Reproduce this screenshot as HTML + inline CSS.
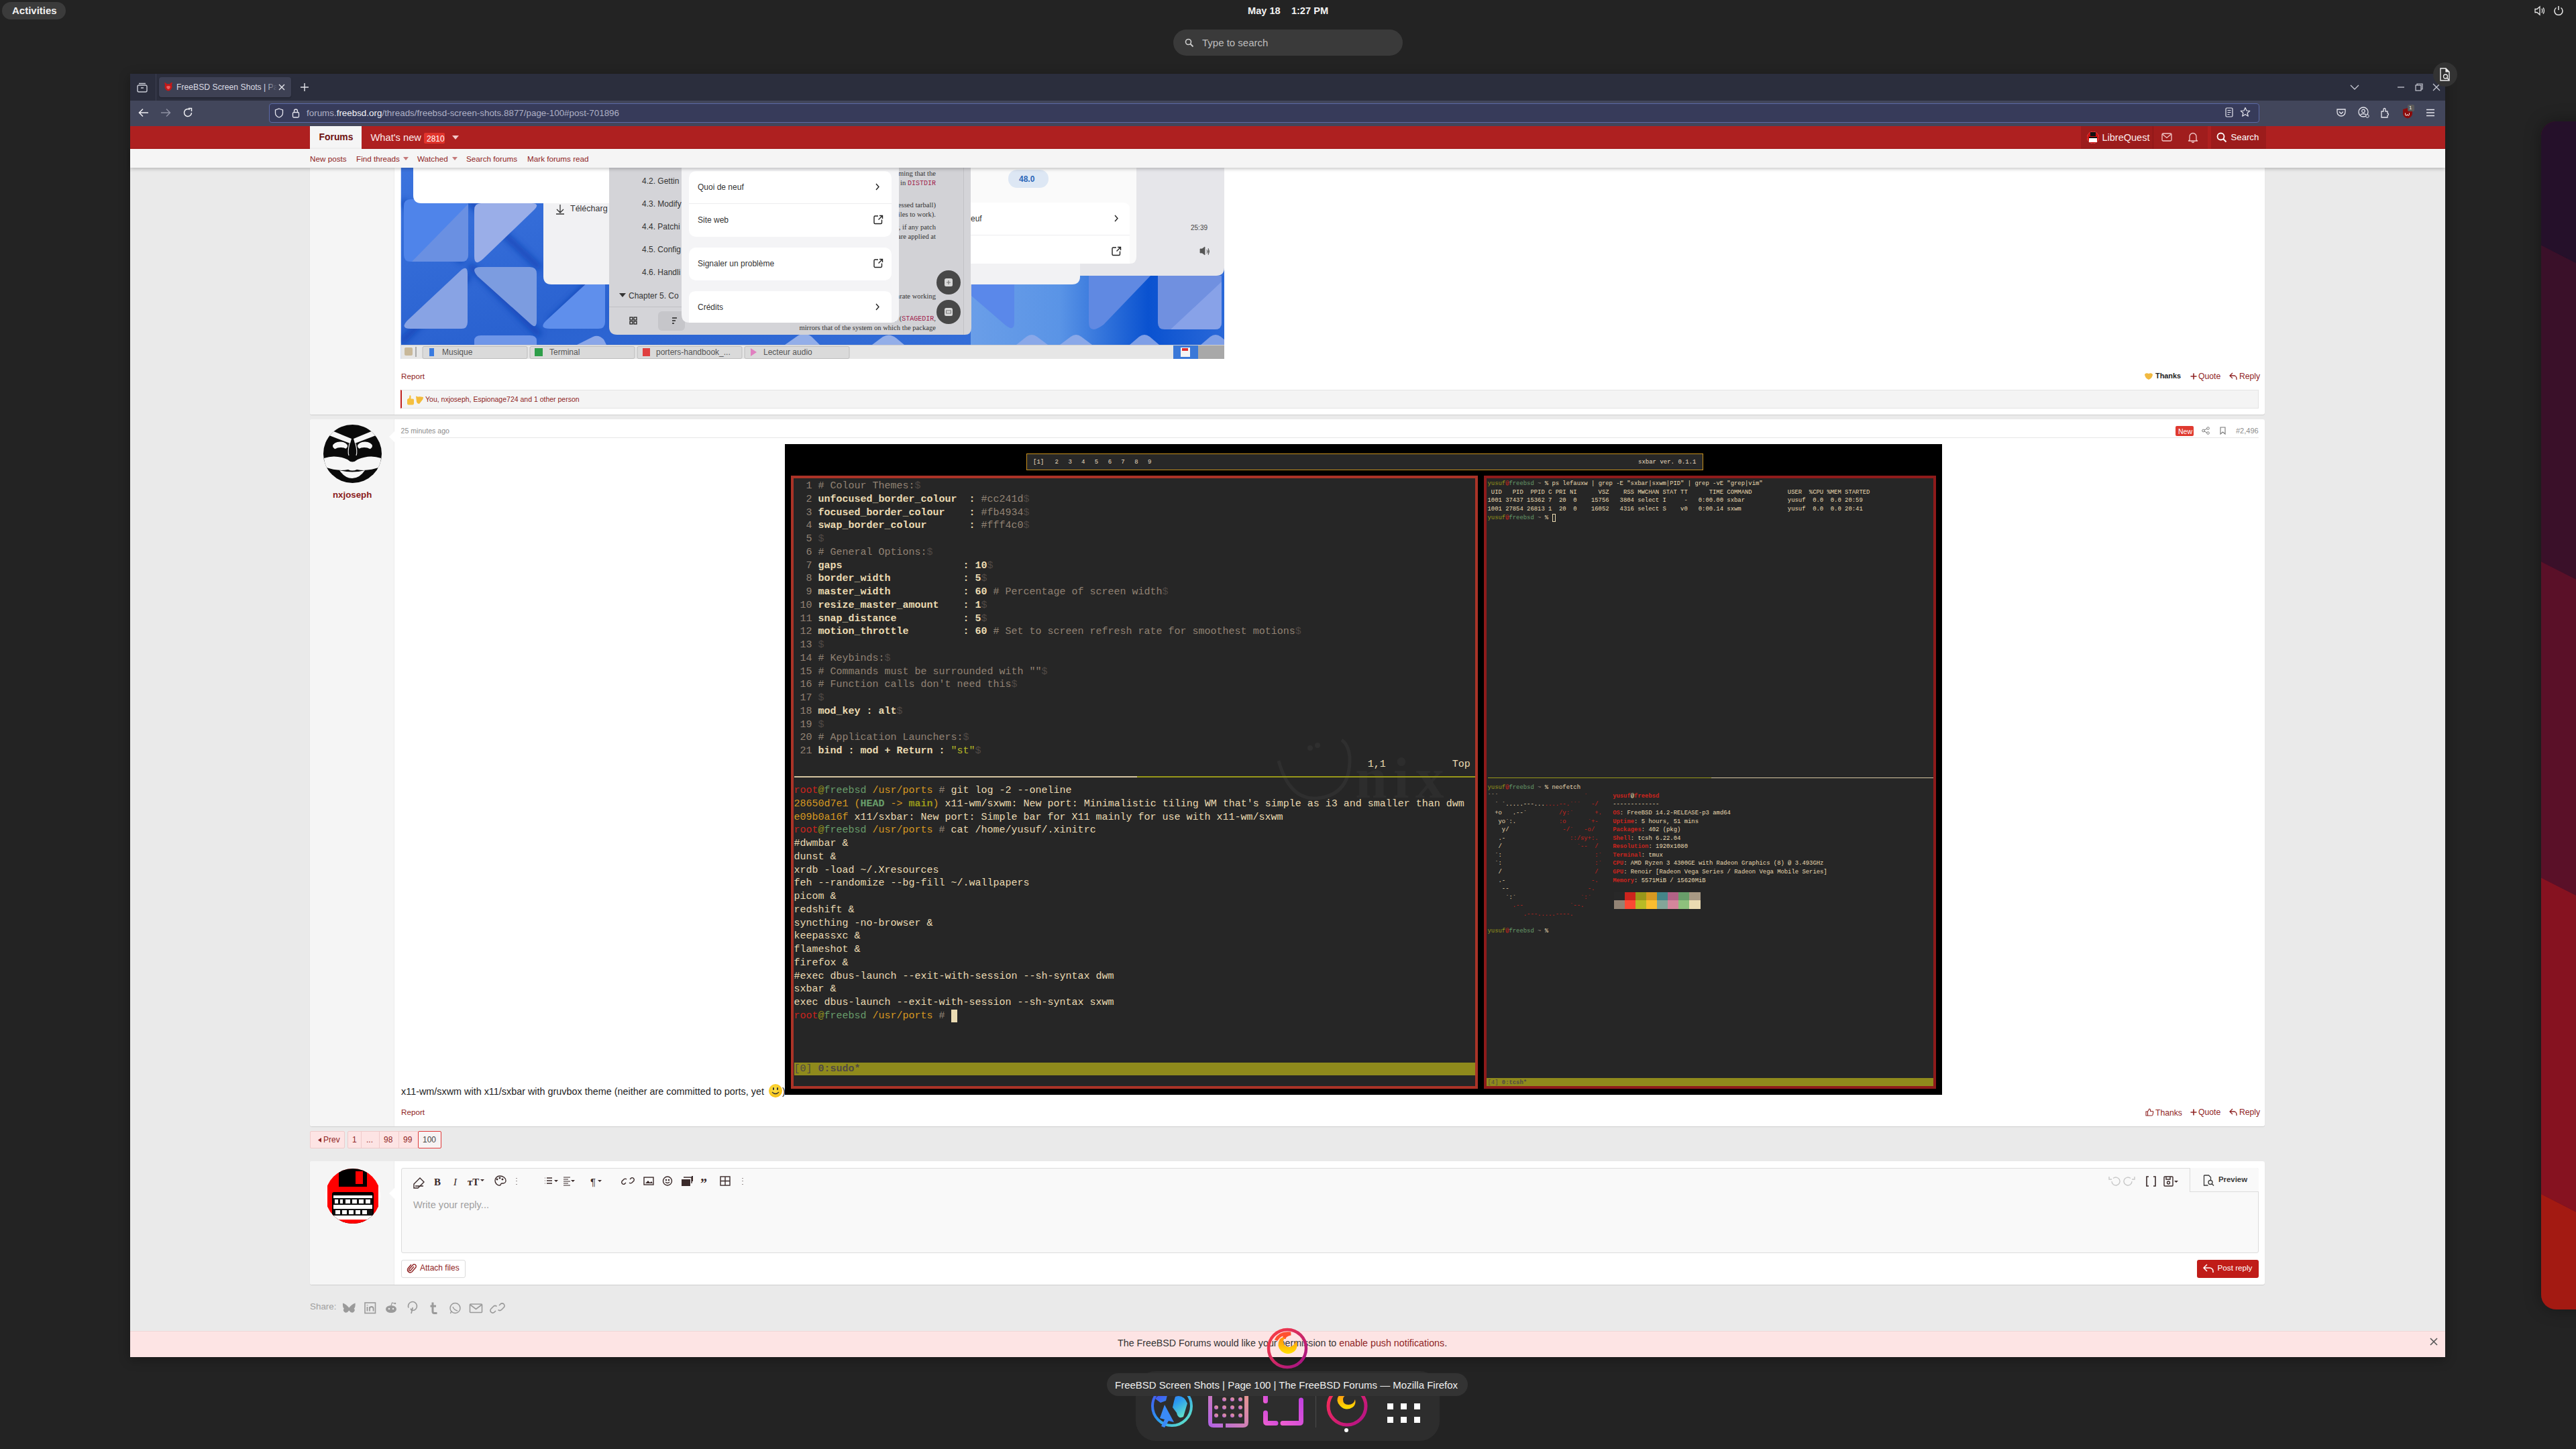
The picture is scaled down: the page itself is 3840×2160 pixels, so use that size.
<!DOCTYPE html>
<html><head><meta charset="utf-8">
<style>
*{margin:0;padding:0;box-sizing:border-box}
html,body{width:3840px;height:2160px;overflow:hidden;background:#232323;font-family:"Liberation Sans",sans-serif}
.a{position:absolute}
.t{position:absolute;white-space:pre;line-height:1}
.mono{font-family:"Liberation Mono",monospace}
svg{position:absolute;overflow:visible}
</style></head><body>

<!-- GNOME top bar -->
<div class="a" style="left:3px;top:3px;width:95px;height:26px;border-radius:13px;background:#3b3b3b"></div>
<div class="t" style="left:18px;top:8px;font-size:15px;font-weight:bold;color:#f0f0f0">Activities</div>
<div class="t" style="left:1860px;top:8.5px;font-size:14.6px;font-weight:bold;color:#f2f2f2">May 18&nbsp;&nbsp;&nbsp;&nbsp;1:27 PM</div>
<div class="a" style="left:1749px;top:44px;width:342px;height:39px;border-radius:20px;background:#3a3a3a"></div>
<svg style="left:1766px;top:57px" width="14" height="14" viewBox="0 0 14 14"><circle cx="5.5" cy="5.5" r="4" fill="none" stroke="#cfcfcf" stroke-width="1.6"/><path d="M8.5 8.5 L12.5 12.5" stroke="#cfcfcf" stroke-width="1.8"/></svg>
<div class="t" style="left:1792px;top:56px;font-size:15px;color:#bdbdbd">Type to search</div>
<!-- volume & power -->
<svg style="left:3778px;top:8px" width="18" height="16" viewBox="0 0 18 16"><path d="M1 5.5h3l4-3.5v12l-4-3.5H1z" fill="none" stroke="#e8e8e8" stroke-width="1.3"/><path d="M11 5c1 1 1 5 0 6M13 3.5c2 2 2 7 0 9" fill="none" stroke="#e8e8e8" stroke-width="1.3"/></svg>
<svg style="left:3806px;top:8px" width="16" height="16" viewBox="0 0 16 16"><path d="M4.5 3.5a6 6 0 1 0 7 0" fill="none" stroke="#e8e8e8" stroke-width="1.5"/><path d="M8 1v6" stroke="#e8e8e8" stroke-width="1.5"/></svg>
<!-- right side wallpaper window -->
<div class="a" style="left:3788px;top:181px;width:80px;height:1771px;border-radius:22px;overflow:hidden;background:#5a1028;box-shadow:0 0 24px rgba(0,0,0,.35)">
<svg style="left:0;top:0" width="80" height="1771" viewBox="0 0 80 1771"><path d="M0 0H80V226L0 185Z" fill="#25102a"/><path d="M0 185L80 226V697L0 656.5Z" fill="#3a1029"/><path d="M0 656.5L80 697V1168L0 1127.5Z" fill="#5a1028"/><path d="M0 1127.5L80 1168V1640L0 1599Z" fill="#861220"/><path d="M0 1599L80 1640V1771H0Z" fill="#a31a12"/></svg>
</div>

<!-- Firefox window -->
<div class="a" style="left:194px;top:110px;width:3451px;height:1913px;background:#eaeaea;box-shadow:0 4px 16px rgba(0,0,0,.3)"></div>
<!-- tab bar -->
<div class="a" style="left:194px;top:110px;width:3451px;height:40px;background:#2b2e3d"></div>
<svg style="left:203px;top:122px" width="18" height="16" viewBox="0 0 18 16"><rect x="2" y="5" width="14" height="10" rx="2" fill="none" stroke="#c8cad4" stroke-width="1.4"/><path d="M4 2.5h10M7 9h4" stroke="#c8cad4" stroke-width="1.4"/></svg>
<div class="a" style="left:232px;top:110px;width:1px;height:40px;background:#3c3f50"></div>
<div class="a" style="left:237px;top:115px;width:197px;height:30px;border-radius:4px;background:#3e4154;box-shadow:0 1px 2px rgba(0,0,0,.3)"></div>
<svg style="left:243px;top:121px" width="16" height="16" viewBox="0 0 16 16"><path d="M2 2q3 0 4 2.5q2-1 4 0q1-2.5 4-2.5q-1 3-1 4q1 2 0 4.5q-2 4-5 4q-3 0-5-4q-1-2.5 0-4.5q0-1-1-4z" fill="#c41818"/><path d="M5 8q3-2 6 0q-1 4-3 4t-3-4z" fill="#e86060"/></svg>
<div class="a" style="left:263px;top:118px;width:150px;height:24px;overflow:hidden"><div class="t" style="left:0;top:6px;font-size:12.2px;color:#dcdce4">FreeBSD Screen Shots | Pa</div></div>
<div class="a" style="left:395px;top:118px;width:18px;height:24px;background:linear-gradient(90deg,rgba(62,65,84,0),#3e4154)"></div>
<svg style="left:415px;top:125px" width="10" height="10" viewBox="0 0 10 10"><path d="M1 1L9 9M9 1L1 9" stroke="#e4e4ea" stroke-width="1.4"/></svg>
<svg style="left:447px;top:123px" width="14" height="14" viewBox="0 0 14 14"><path d="M7 1v12M1 7h12" stroke="#e4e4ea" stroke-width="1.4"/></svg>
<svg style="left:3503px;top:125px" width="14" height="10" viewBox="0 0 14 10"><path d="M1 2L7 8L13 2" fill="none" stroke="#c8cad4" stroke-width="1.3"/></svg>
<svg style="left:3573px;top:125px" width="12" height="10" viewBox="0 0 12 10"><path d="M1 5h10" stroke="#c8cad4" stroke-width="1.3"/></svg>
<svg style="left:3600px;top:124px" width="12" height="12" viewBox="0 0 12 12"><rect x="1" y="3" width="8" height="8" fill="none" stroke="#c8cad4" stroke-width="1.2"/><path d="M3 3V1h8v8H9" fill="none" stroke="#c8cad4" stroke-width="1.2"/></svg>
<svg style="left:3626px;top:124px" width="12" height="12" viewBox="0 0 12 12"><path d="M1 1L11 11M11 1L1 11" stroke="#c8cad4" stroke-width="1.3"/></svg>
<!-- floating circle icon (gnome overview) -->
<div class="a" style="left:3627px;top:93px;width:36px;height:36px;border-radius:50%;background:#333"></div>
<svg style="left:3636px;top:101px" width="18" height="20" viewBox="0 0 18 20"><path d="M2 1h8l5 5v13H2z" fill="none" stroke="#eee" stroke-width="1.4"/><path d="M10 1v5h5" fill="#eee" stroke="#eee" stroke-width="1.2"/><circle cx="9.5" cy="13" r="3" fill="none" stroke="#eee" stroke-width="1.3"/><path d="M11.5 15l3 3" stroke="#eee" stroke-width="1.4"/></svg>
<!-- nav bar -->
<div class="a" style="left:194px;top:150px;width:3451px;height:38px;background:#42465b"></div>
<svg style="left:206px;top:161px" width="16" height="14" viewBox="0 0 16 14"><path d="M15 7H2M7 1.5L1.5 7L7 12.5" fill="none" stroke="#f0f0f4" stroke-width="1.5"/></svg>
<svg style="left:239px;top:161px" width="16" height="14" viewBox="0 0 16 14"><path d="M1 7h13M9 1.5L14.5 7L9 12.5" fill="none" stroke="#8e91a3" stroke-width="1.5"/></svg>
<svg style="left:272px;top:160px" width="16" height="16" viewBox="0 0 16 16"><path d="M13.5 8A5.5 5.5 0 1 1 11 3.4" fill="none" stroke="#f0f0f4" stroke-width="1.5"/><path d="M9 1.5h4.5V6" fill="none" stroke="#f0f0f4" stroke-width="1.5"/></svg>
<div class="a" style="left:401px;top:154px;width:2967px;height:29px;border-radius:4px;background:#373b5a;border:1px solid #5c6aa6"></div>
<svg style="left:409px;top:161px" width="14" height="15" viewBox="0 0 14 15"><path d="M7 1L12.5 3V7.5C12.5 10.5 10 13 7 14C4 13 1.5 10.5 1.5 7.5V3Z" fill="none" stroke="#e6e6ee" stroke-width="1.3"/></svg>
<svg style="left:435px;top:161px" width="12" height="15" viewBox="0 0 12 15"><rect x="1.5" y="6.5" width="9" height="7.5" rx="1.5" fill="none" stroke="#e6e6ee" stroke-width="1.3"/><path d="M3.5 6.5V4.5a2.5 2.5 0 0 1 5 0V6.5" fill="none" stroke="#e6e6ee" stroke-width="1.3"/></svg>
<div class="t" style="left:457px;top:161.5px;font-size:13.4px;color:#aeb1c6">forums.<span style="color:#f4f4f8">freebsd.org</span>/threads/freebsd-screen-shots.8877/page-100#post-701896</div>
<svg style="left:3317px;top:160px" width="12" height="15" viewBox="0 0 12 15"><rect x="1" y="1" width="10" height="13" rx="1.5" fill="none" stroke="#e6e6ee" stroke-width="1.2"/><path d="M3.5 4.5h5M3.5 7.5h5M3.5 10.5h3" stroke="#e6e6ee" stroke-width="1.2"/></svg>
<svg style="left:3339px;top:159px" width="16" height="16" viewBox="0 0 16 16"><path d="M8 1.5L10 6l4.8.4-3.7 3.1 1.2 4.7L8 11.6l-4.3 2.6 1.2-4.7L1.2 6.4 6 6z" fill="none" stroke="#e6e6ee" stroke-width="1.2" stroke-linejoin="round"/></svg>
<svg style="left:3482px;top:160px" width="16" height="16" viewBox="0 0 16 16"><path d="M2 3h12v4a6 6 0 0 1-12 0z" fill="none" stroke="#e6e6ee" stroke-width="1.3"/><path d="M5 6.5l3 3 3-3" fill="none" stroke="#e6e6ee" stroke-width="1.3"/></svg>
<svg style="left:3515px;top:159px" width="18" height="18" viewBox="0 0 18 18"><circle cx="8" cy="8" r="7" fill="none" stroke="#e6e6ee" stroke-width="1.3"/><circle cx="8" cy="6.5" r="2.3" fill="none" stroke="#e6e6ee" stroke-width="1.2"/><path d="M3.5 12.5c1.5-2.5 7.5-2.5 9 0" fill="none" stroke="#e6e6ee" stroke-width="1.2"/><circle cx="14" cy="14" r="2.3" fill="#42465b" stroke="#e6e6ee" stroke-width="1"/></svg>
<svg style="left:3548px;top:160px" width="16" height="16" viewBox="0 0 16 16"><path d="M2 6h3V3a1.5 1.5 0 0 1 3 0v3h3v3a1.5 1.5 0 0 1 0 3v3H2z" fill="none" stroke="#e6e6ee" stroke-width="1.3" stroke-linejoin="round"/></svg>
<svg style="left:3581px;top:160px" width="16" height="17" viewBox="0 0 16 17"><path d="M8 1l7 2v6c0 4-3 6.5-7 7.5C4 15.5 1 13 1 9V3z" fill="#8a0c0c"/><path d="M4.5 8.5v2a1.5 1.5 0 0 0 3 0a1.5 1.5 0 0 0 3 0v-2" fill="none" stroke="#fff" stroke-width="1"/></svg>
<div class="a" style="left:3589px;top:156px;width:10px;height:10px;background:#5a5a5a;border-radius:2px"></div>
<div class="t" style="left:3591px;top:157px;font-size:8px;color:#eee">1</div>
<svg style="left:3616px;top:162px" width="14" height="12" viewBox="0 0 14 12"><path d="M1 1.5h12M1 6h12M1 10.5h12" stroke="#e6e6ee" stroke-width="1.4"/></svg>
<!-- red header -->
<div class="a" style="left:194px;top:188px;width:3451px;height:34px;background:#ae2020"></div>
<div class="a" style="left:462px;top:188px;width:77px;height:34px;background:#f5f5f5"></div>
<div class="t" style="left:475.5px;top:198px;font-size:13.9px;font-weight:bold;color:#6e1010">Forums</div>
<div class="t" style="left:552.5px;top:198px;font-size:14.7px;color:#fbeaea">What's new</div>
<div class="a" style="left:632px;top:198px;width:31px;height:16px;border-radius:2px;background:#e2342c"></div>
<div class="t" style="left:636px;top:201px;font-size:12px;color:#fff">2810</div>
<svg style="left:674px;top:202px" width="10" height="6" viewBox="0 0 10 6"><path d="M0 0h10L5 6z" fill="#f3c8c8"/></svg>
<div class="a" style="left:3102px;top:188px;width:108px;height:34px;background:#9c1c1c"></div>
<div class="a" style="left:3209px;top:188px;width:1px;height:34px;background:#8a1616"></div>
<div class="a" style="left:3250px;top:188px;width:1px;height:34px;background:#8a1616"></div>
<div class="a" style="left:3210px;top:188px;width:81px;height:34px;background:#a01d1d"></div>
<div class="a" style="left:3296px;top:188px;width:82px;height:34px;background:#9c1c1c"></div>
<div class="a" style="left:3111px;top:196px;width:18px;height:18px;border-radius:50%;background:#e8e8e8;overflow:hidden"><div class="a" style="left:0;top:0;width:18px;height:18px;background:#d01010"></div><div class="a" style="left:3px;top:8px;width:12px;height:8px;background:#fff;border-top:2px solid #111"></div><div class="a" style="left:5px;top:1px;width:8px;height:6px;background:#111"></div></div>
<div class="t" style="left:3133.5px;top:198px;font-size:14.5px;color:#fbeaea">LibreQuest</div>
<svg style="left:3222px;top:198px" width="16" height="13" viewBox="0 0 16 13"><rect x="1" y="1" width="14" height="11" rx="1.5" fill="none" stroke="#f1c9c9" stroke-width="1.3"/><path d="M1.5 2L8 7.5L14.5 2" fill="none" stroke="#f1c9c9" stroke-width="1.3"/></svg>
<svg style="left:3262px;top:196px" width="14" height="17" viewBox="0 0 14 17"><path d="M2 12.5V7.5a5 5 0 0 1 10 0v5l1.5 1.5H.5z" fill="none" stroke="#f1c9c9" stroke-width="1.3" stroke-linejoin="round"/><path d="M5.5 15a1.5 1.5 0 0 0 3 0" fill="none" stroke="#f1c9c9" stroke-width="1.3"/></svg>
<svg style="left:3304px;top:197px" width="16" height="16" viewBox="0 0 16 16"><circle cx="6.5" cy="6.5" r="5" fill="none" stroke="#fff" stroke-width="1.8"/><path d="M10 10l4.5 4.5" stroke="#fff" stroke-width="2"/></svg>
<div class="t" style="left:3325.5px;top:198px;font-size:13.2px;color:#fff">Search</div>
<!-- sub nav -->
<div class="a" style="left:194px;top:222px;width:3451px;height:28px;background:#f5f5f5;box-shadow:0 2px 5px rgba(0,0,0,.22);z-index:5"></div>
<div class="t" style="left:462px;top:231px;font-size:11.7px;color:#8f2424;z-index:6">New posts</div>
<div class="t" style="left:531px;top:231px;font-size:11.7px;color:#8f2424;z-index:6">Find threads</div>
<svg style="left:601px;top:234px;z-index:6" width="8" height="5" viewBox="0 0 8 5"><path d="M0 0h8L4 5z" fill="#c47a7a"/></svg>
<div class="t" style="left:622px;top:231px;font-size:11.7px;color:#8f2424;z-index:6">Watched</div>
<svg style="left:674px;top:234px;z-index:6" width="8" height="5" viewBox="0 0 8 5"><path d="M0 0h8L4 5z" fill="#c47a7a"/></svg>
<div class="t" style="left:695px;top:231px;font-size:11.7px;color:#8f2424;z-index:6">Search forums</div>
<div class="t" style="left:786px;top:231px;font-size:11.7px;color:#8f2424;z-index:6">Mark forums read</div>

<!-- post 1 container -->
<div class="a" style="left:462px;top:240px;width:2914px;height:378px;background:#fff;border-radius:0 0 3px 3px;box-shadow:0 1px 1px rgba(0,0,0,.12)"></div>
<div class="a" style="left:462px;top:240px;width:126px;height:378px;background:#f5f5f5;border-right:1px solid #ececec;border-radius:0 0 0 3px"></div>
<!-- post 2 container -->
<div class="a" style="left:462px;top:625px;width:2914px;height:1054px;background:#fff;border-radius:3px;box-shadow:0 1px 1px rgba(0,0,0,.12)"></div>
<div class="a" style="left:462px;top:625px;width:126px;height:1054px;background:#f5f5f5;border-right:1px solid #ececec;border-radius:3px 0 0 3px"></div>
<!-- reply container -->
<div class="a" style="left:462px;top:1731px;width:2914px;height:184px;background:#fff;border-radius:3px;box-shadow:0 1px 1px rgba(0,0,0,.12)"></div>
<div class="a" style="left:462px;top:1731px;width:126px;height:184px;background:#f5f5f5;border-right:1px solid #ececec;border-radius:3px 0 0 3px"></div>

<!-- post1 embedded screenshot -->
<svg style="left:0;top:0" width="3840" height="2160" viewBox="0 0 3840 2160">
<defs>
<clipPath id="c1"><rect x="597.5" y="240" width="1227.5" height="295"/></clipPath>
<linearGradient id="bl" x1="0" y1="0" x2="1" y2="1"><stop offset="0" stop-color="#3c74de"/><stop offset=".5" stop-color="#2a62d0"/><stop offset="1" stop-color="#3a74dc"/></linearGradient><filter id="blur4" x="-20%" y="-20%" width="140%" height="140%"><feGaussianBlur stdDeviation="5"/></filter><linearGradient id="bl2" x1="0" y1="0" x2="1" y2="0"><stop offset="0" stop-color="#6a9ee8"/><stop offset=".35" stop-color="#5a94e6"/><stop offset=".7" stop-color="#0a52d0"/><stop offset="1" stop-color="#2a68d8"/></linearGradient>
</defs>
<g clip-path="url(#c1)" font-family="Liberation Sans, sans-serif">
<rect x="597.5" y="240" width="1227.5" height="295" fill="url(#bl)"/>
<g filter="url(#blur4)" stroke="#0a3cb0" stroke-width="9" opacity=".75" fill="none"><path d="M700 395L805 500"/><path d="M598 510L700 410"/><path d="M805 400L700 300"/><path d="M900 400L820 480"/><path d="M600 300L690 390"/></g>
<!-- triangles -->
<path d="M612 297H688Q698 297 698 307V380Q698 390 688 390H612Q602 390 602 380V307Q602 297 612 297Z" fill="#4f84ea"/>
<path d="M698 304V380Q698 390 688 390H614Z" fill="#6a90e2"/>
<path d="M717 303H792Q806 303 796 313L720 386Q707 398 707 382V313Q707 303 717 303Z" fill="#9aaee8"/>
<path d="M612 490H688Q697 490 697 480V408Q697 394 686 404L607 478Q596 490 612 490Z" fill="#88a3e4"/>
<path d="M717 398H790Q800 398 800 408V478Q800 492 790 482L712 412Q700 398 717 398Z" fill="#7c9ce0"/>
<path d="M820 490H892Q902 490 902 480V410Q902 396 892 406L814 478Q802 490 820 490Z" fill="#5f8fec"/>
<rect x="1447" y="411" width="378" height="103" fill="url(#bl2)"/>
<path d="M1447 424H1512V480Q1512 496 1498 484L1447 440Z" fill="#5a88ea"/>
<path d="M1623 411H1715L1645 484Q1623 500 1623 480Z" fill="#6089e2"/>
<path d="M1726 411H1821V481Q1821 491 1811 491H1736Q1726 491 1726 481Z" fill="#7090e0"/>
<path d="M1821 420V481Q1821 491 1811 491H1745Z" fill="#88a2e8"/>
<path d="M1515 514L1530 502Q1538 496 1546 502L1562 514Z" fill="#8aa8e8"/>
<path d="M1580 514L1596 502Q1604 496 1612 502L1628 514Z" fill="#8aa8e8"/>
<path d="M1684 514L1698 502Q1706 496 1714 502L1728 514Z" fill="#7f9fe6"/>
<path d="M1790 514L1804 502Q1812 496 1820 502L1834 514Z" fill="#7f9fe6"/>
<path d="M707 514V508Q707 500 717 500H790Q800 500 800 508V514Z" fill="#6f96e8"/>
<path d="M860 514L884 502Q892 498 900 506L904 514Z" fill="#8aa6e8"/>
<path d="M1170 514L1190 500Q1200 494 1210 502L1222 514Z" fill="#93aee8"/>
<path d="M1300 514L1316 502Q1326 496 1336 504L1348 514Z" fill="#93aee8"/>
<!-- white panel top-left -->
<path d="M616 240H910V303H628Q616 303 616 291Z" fill="#ffffff"/>
<path d="M810 303H910V424H822Q810 424 810 412Z" fill="#f1f1f3"/>
<path d="M835 305v11M830 312l5 5 5-5M829 319h12" fill="none" stroke="#333" stroke-width="1.3"/>
<text x="850" y="315" font-size="12.5" fill="#333">Télécharg</text>
<!-- gray main panel -->
<path d="M908 240H1448V489Q1448 499 1438 499H920Q908 499 908 487Z" fill="#d4d4d8"/>
<rect x="908" y="457" width="270" height="1" fill="#c0c0c4"/>
<rect x="981" y="464" width="40" height="29" rx="6" fill="#c6c6ca"/>
<g fill="none" stroke="#222" stroke-width="1.3"><rect x="939" y="473" width="4" height="4"/><rect x="945" y="473" width="4" height="4"/><rect x="939" y="479" width="4" height="4"/><rect x="945" y="479" width="4" height="4"/></g>
<path d="M1002 474h7M1002 478h5M1002 482h3" stroke="#222" stroke-width="1.3"/>
<g font-size="12" fill="#333"><text x="957" y="274">4.2. Gettin</text><text x="957" y="308">4.3. Modify</text><text x="957" y="342">4.4. Patchi</text><text x="957" y="376">4.5. Config</text><text x="957" y="410">4.6. Handli</text><text x="937" y="445">Chapter 5. Co</text></g>
<path d="M923 437h10l-5 6z" fill="#333"/>
<!-- pdf page text -->
<rect x="1178" y="240" width="258" height="259" fill="#d2d2d6"/>
<rect x="1436" y="240" width="1" height="259" fill="#c2c2c6"/>
<g font-family="Liberation Serif, serif" font-size="10.6" fill="#333" text-anchor="end">
<text x="1395" y="262">assuming that the</text><text x="1395" y="276">the file in <tspan fill="#a0204a" font-family="Liberation Mono, monospace" font-size="10">DISTDIR</tspan></text>
<text x="1395" y="309">(compressed tarball)</text><text x="1395" y="323">files to work).</text>
<text x="1395" y="342">directory, if any patch</text><text x="1395" y="356">files are applied at</text>
<text x="1395" y="445">a  separate  working</text><text x="1395" y="478">staging directory (<tspan fill="#a0204a" font-family="Liberation Mono, monospace" font-size="10">STAGEDIR</tspan>,</text>
<text x="1395" y="492">mirrors that of the system on which the package</text>
</g>
<circle cx="1414" cy="421" r="18" fill="#484848"/><rect x="1408" y="415" width="12" height="12" rx="2.5" fill="#d8d8d8"/><path d="M1414 418v6M1411 421h6" stroke="#777" stroke-width="1.2"/>
<circle cx="1414" cy="465" r="18" fill="#484848"/><rect x="1408" y="459" width="12" height="12" rx="2.5" fill="#d8d8d8"/><rect x="1410.5" y="463" width="7" height="4" fill="none" stroke="#777" stroke-width="1"/>
<!-- dialog -->
<path d="M1016 240H1340V469Q1340 481 1328 481H1028Q1016 481 1016 469Z" fill="#f4f4f6"/>
<rect x="1027" y="255" width="302" height="98" rx="10" fill="#fff"/>
<rect x="1027" y="303" width="302" height="1" fill="#ececee"/>
<rect x="1027" y="369" width="302" height="49" rx="10" fill="#fff"/>
<path d="M1037 434H1319Q1329 434 1329 444V481H1027V444Q1027 434 1037 434Z" fill="#fff"/>
<g font-size="12" fill="#333"><text x="1040" y="283">Quoi de neuf</text><text x="1040" y="332">Site web</text><text x="1040" y="397">Signaler un problème</text><text x="1040" y="462">Crédits</text></g>
<g fill="none" stroke="#222" stroke-width="1.4"><path d="M1306 274l4 4.5-4 4.5M1306 453l4 4.5-4 4.5"/><path d="M1309 322h-4.5a1.5 1.5 0 0 0-1.5 1.5v8.5a1.5 1.5 0 0 0 1.5 1.5h8.5a1.5 1.5 0 0 0 1.5-1.5v-4.5M1309.5 327.5l6-6M1311 321.5h4.5v4.5M1309 387h-4.5a1.5 1.5 0 0 0-1.5 1.5v8.5a1.5 1.5 0 0 0 1.5 1.5h8.5a1.5 1.5 0 0 0 1.5-1.5v-4.5M1309.5 392.5l6-6M1311 386.5h4.5v4.5"/></g>
<!-- right dialog -->
<path d="M1447 240H1825V399Q1825 411 1813 411H1447Z" fill="#e6e6ea"/>
<path d="M1447 392H1610V412Q1610 424 1598 424H1447Z" fill="#f2f2f4"/>
<path d="M1447 240H1694V383Q1694 393 1684 393H1447Z" fill="#fafafa"/>
<path d="M1447 302H1674Q1684 302 1684 312V393H1447Z" fill="#ffffff"/>
<rect x="1447" y="350" width="237" height="1" fill="#ececee"/>
<rect x="1503" y="253" width="60" height="27" rx="13" fill="#dde7f4"/>
<text x="1519" y="271" font-size="12" font-weight="bold" fill="#2a66b8">48.0</text>
<text x="1447" y="330" font-size="12" fill="#333">euf</text>
<path d="M1662 321l4 4.5-4 4.5" fill="none" stroke="#222" stroke-width="1.4"/>
<path d="M1664 369h-4.5a1.5 1.5 0 0 0-1.5 1.5v8.5a1.5 1.5 0 0 0 1.5 1.5h8.5a1.5 1.5 0 0 0 1.5-1.5v-4.5M1664.5 374.5l6-6M1666 368.5h4.5v4.5" fill="none" stroke="#222" stroke-width="1.4"/>
<text x="1775" y="343" font-size="10" fill="#444">25:39</text>
<path d="M1789 371h3l4-3v12l-4-3h-3zM1799 372q2 3 0 6M1801 370q3 5 0 10" fill="#555" stroke="#555" stroke-width=".8"/>
<!-- taskbar -->
<rect x="597.5" y="514" width="1227.5" height="21" fill="#e6e6e6"/>
<rect x="597.5" y="514" width="1227.5" height="1" fill="#d0d0d0"/>
<rect x="603" y="518" width="12" height="12" rx="2" fill="#c8b89a"/>
<rect x="619" y="517" width="2" height="15" fill="#aaa"/>
<g fill="#dadada" stroke="#bcbcbc" stroke-width="1"><rect x="630" y="516.5" width="156" height="18" rx="2"/><rect x="790" y="516.5" width="156" height="18" rx="2"/><rect x="950" y="516.5" width="156" height="18" rx="2"/><rect x="1110" y="516.5" width="156" height="18" rx="2"/></g>
<rect x="640" y="519" width="7" height="12" fill="#3a7be0"/>
<rect x="797" y="519" width="12" height="12" fill="#2e9e4a"/>
<rect x="958" y="519" width="11" height="12" fill="#e04040"/>
<path d="M1119 519l9 6-9 6z" fill="#e080c0"/>
<g font-size="12" fill="#555"><text x="659" y="529">Musique</text><text x="819" y="529">Terminal</text><text x="978" y="529">porters-handbook_...</text><text x="1138" y="529">Lecteur audio</text></g>
<rect x="1749" y="515" width="37" height="20" fill="#3a78d8"/>
<rect x="1760" y="518" width="14" height="14" fill="#f4f4f4"/><rect x="1762" y="519" width="9" height="4" fill="#e03030"/>
<rect x="1786" y="515" width="39" height="20" fill="#a8a8a8"/>
</g>
</svg>
<!-- post1 footer -->
<div class="t" style="left:598px;top:555px;font-size:11.7px;color:#8f2424">Report</div>
<svg style="left:3196px;top:555px" width="14" height="12" viewBox="0 0 14 12"><path d="M1 3Q3 0 7 2Q11 0 13 3Q13 8 7 11Q1 8 1 3Z" fill="#f1b940"/></svg>
<div class="t" style="left:3213px;top:555px;font-size:10.9px;font-weight:bold;color:#222">Thanks</div>
<svg style="left:3265px;top:556px" width="10" height="10" viewBox="0 0 10 10"><path d="M5 0.5v9M0.5 5h9" stroke="#8f2424" stroke-width="1.6"/></svg><div class="t" style="left:3277px;top:555px;font-size:12.2px;color:#8f2424">Quote</div>
<svg style="left:3323px;top:555px" width="12" height="12" viewBox="0 0 12 12"><path d="M5 1L1 5l4 4M1 5h6a4 4 0 0 1 4 4v2" fill="none" stroke="#8f2424" stroke-width="1.3"/></svg>
<div class="t" style="left:3338px;top:555px;font-size:12.2px;color:#8f2424">Reply</div>
<div class="a" style="left:597px;top:581px;width:2770px;height:28px;background:#f4f4f4;border:1px solid #e4e4e4;border-left:2px solid #c02020"></div>
<svg style="left:605px;top:588px" width="28" height="16" viewBox="0 0 28 16"><path d="M5.5 1.5q1.5-1 2 1v4h3q1.5 0 1.5 1.5v5.5q0 2-2 2H4q-2 0-2-2V8q0-1 1-1.5l2-1z" fill="#f5c040"/><path d="M15 2.5l3 1q3-.5 5 0l3 .5q0 3-2 5l-4 5q-3 0-4-3z" fill="#f3bb3a"/></svg>
<div class="t" style="left:634px;top:590px;font-size:10.5px;color:#8f2424">You, nxjoseph, Espionage724 and 1 other person</div>

<!-- post2 user -->
<div class="a" style="left:482px;top:633px;width:87px;height:87px;border-radius:50%;background:#0a0a0a;overflow:hidden">
<svg style="left:0;top:0" width="87" height="87" viewBox="0 0 87 87"><g fill="#f6f6f6"><path d="M6 15L13 9L42 21L40 28Z"/><path d="M47 28L45 21L74 9L81 15Z"/><ellipse cx="25" cy="32" rx="11" ry="6.5"/><ellipse cx="62" cy="32" rx="11" ry="6.5"/></g><g fill="#0a0a0a"><ellipse cx="26" cy="42" rx="12" ry="8"/><ellipse cx="61" cy="42" rx="12" ry="8"/></g><path d="M39 28Q36 40 38 46M48 28Q51 40 49 46" fill="none" stroke="#f0f0f0" stroke-width="1.2"/><path d="M1 50Q18 44 36 52Q43 59 51 52Q69 44 86 50L85 63Q66 70 50 67Q43 70 37 67Q21 70 2 63Z" fill="#f6f6f6"/><path d="M24 68Q43 73 62 68Q54 80 43 80Q32 80 24 68Z" fill="#f6f6f6"/></svg>
</div>
<div class="t" style="left:496px;top:731px;font-size:13.3px;font-weight:bold;color:#8a1c1c">nxjoseph</div>
<svg style="left:580px;top:642px" width="9" height="18" viewBox="0 0 9 18"><path d="M9 0L0 9L9 18Z" fill="#fff"/></svg>
<div class="t" style="left:597.5px;top:637px;font-size:10.6px;color:#8c8c8c">25 minutes ago</div>
<div class="a" style="left:597px;top:652px;width:2770px;height:1px;background:#e6e6e6"></div>
<div class="a" style="left:3243px;top:635px;width:27px;height:14.5px;border-radius:2px;background:#df3a30"></div>
<div class="t" style="left:3247px;top:637.5px;font-size:10.5px;color:#fff">New</div>
<svg style="left:3282px;top:636px" width="12" height="12" viewBox="0 0 12 12"><circle cx="9.5" cy="2.5" r="1.8" fill="none" stroke="#777" stroke-width="1"/><circle cx="2.5" cy="6" r="1.8" fill="none" stroke="#777" stroke-width="1"/><circle cx="9.5" cy="9.5" r="1.8" fill="none" stroke="#777" stroke-width="1"/><path d="M4 5L8 3M4 7L8 9" stroke="#777" stroke-width="1"/></svg>
<svg style="left:3309px;top:636px" width="9" height="12" viewBox="0 0 9 12"><path d="M1 1h7v10L4.5 8 1 11z" fill="none" stroke="#777" stroke-width="1.1"/></svg>
<div class="t" style="left:3333px;top:637px;font-size:11px;color:#8c8c8c">#2,496</div>

<div class="a" style="left:1170px;top:662px;width:1725px;height:970px;background:#000"></div>
<div class="a" style="left:1529.5px;top:676px;width:1009.5px;height:25px;background:#282828;border:1.5px solid #c8901c"></div>
<div class="t mono" style="left:1540px;top:685px;font-size:9px;color:#e8dcc0">[1]</div>
<div class="t mono" style="left:1572.5px;top:685px;font-size:9px;color:#e8dcc0">2</div>
<div class="t mono" style="left:1592.4px;top:685px;font-size:9px;color:#e8dcc0">3</div>
<div class="t mono" style="left:1612px;top:685px;font-size:9px;color:#e8dcc0">4</div>
<div class="t mono" style="left:1631.8px;top:685px;font-size:9px;color:#e8dcc0">5</div>
<div class="t mono" style="left:1651.7px;top:685px;font-size:9px;color:#e8dcc0">6</div>
<div class="t mono" style="left:1671.3px;top:685px;font-size:9px;color:#e8dcc0">7</div>
<div class="t mono" style="left:1691.2px;top:685px;font-size:9px;color:#e8dcc0">8</div>
<div class="t mono" style="left:1711px;top:685px;font-size:9px;color:#e8dcc0">9</div>
<div class="t mono" style="left:2442px;top:685px;font-size:9px;color:#e8dcc0">sxbar ver. 0.1.1</div>
<div class="a" style="left:1179px;top:709px;width:1024px;height:914px;background:#262626;border:4.5px solid #ab3327"></div>
<div class="a" style="left:2212px;top:709px;width:674px;height:914px;background:#262626;border:4px solid #8e1b1b"></div>
<svg style="left:0;top:0" width="3840" height="2160" viewBox="0 0 3840 2160"><path d="M1906 1134Q1922 1192 1962 1190Q2014 1186 2012 1128Q2010 1110 2000 1103" fill="none" stroke="#2f2f2f" stroke-width="5"/><circle cx="1953" cy="1115" r="4" fill="#2f2f2f"/><circle cx="1964" cy="1111" r="4" fill="#2f2f2f"/><text x="2020" y="1189" font-family="Liberation Serif" font-size="86" font-weight="bold" letter-spacing="9" fill="#2d2d2d">nix</text></svg>
<div class="t mono" style="left:1183.5px;top:717.2px;font-size:15px"><span style="color:#928374">  1 </span><span style="color:#928374"># Colour Themes:</span><span style="color:#504945">$</span></div>
<div class="t mono" style="left:1183.5px;top:736.9px;font-size:15px"><span style="color:#928374">  2 </span><span style="color:#ebdbb2;font-weight:bold">unfocused_border_colour  </span><span style="color:#ebdbb2;font-weight:bold">: </span><span style="color:#928374">#cc241d</span><span style="color:#504945">$</span></div>
<div class="t mono" style="left:1183.5px;top:756.7px;font-size:15px"><span style="color:#928374">  3 </span><span style="color:#ebdbb2;font-weight:bold">focused_border_colour    </span><span style="color:#ebdbb2;font-weight:bold">: </span><span style="color:#928374">#fb4934</span><span style="color:#504945">$</span></div>
<div class="t mono" style="left:1183.5px;top:776.4px;font-size:15px"><span style="color:#928374">  4 </span><span style="color:#ebdbb2;font-weight:bold">swap_border_colour       </span><span style="color:#ebdbb2;font-weight:bold">: </span><span style="color:#928374">#fff4c0</span><span style="color:#504945">$</span></div>
<div class="t mono" style="left:1183.5px;top:796.2px;font-size:15px"><span style="color:#928374">  5 </span><span style="color:#504945">$</span></div>
<div class="t mono" style="left:1183.5px;top:815.9px;font-size:15px"><span style="color:#928374">  6 </span><span style="color:#928374"># General Options:</span><span style="color:#504945">$</span></div>
<div class="t mono" style="left:1183.5px;top:835.6px;font-size:15px"><span style="color:#928374">  7 </span><span style="color:#ebdbb2;font-weight:bold">gaps                    : 10</span><span style="color:#504945">$</span></div>
<div class="t mono" style="left:1183.5px;top:855.4px;font-size:15px"><span style="color:#928374">  8 </span><span style="color:#ebdbb2;font-weight:bold">border_width            : 5</span><span style="color:#504945">$</span></div>
<div class="t mono" style="left:1183.5px;top:875.1px;font-size:15px"><span style="color:#928374">  9 </span><span style="color:#ebdbb2;font-weight:bold">master_width            : 60</span><span style="color:#928374"> # Percentage of screen width</span><span style="color:#504945">$</span></div>
<div class="t mono" style="left:1183.5px;top:894.9px;font-size:15px"><span style="color:#928374"> 10 </span><span style="color:#ebdbb2;font-weight:bold">resize_master_amount    : 1</span><span style="color:#504945">$</span></div>
<div class="t mono" style="left:1183.5px;top:914.6px;font-size:15px"><span style="color:#928374"> 11 </span><span style="color:#ebdbb2;font-weight:bold">snap_distance           : 5</span><span style="color:#504945">$</span></div>
<div class="t mono" style="left:1183.5px;top:934.3px;font-size:15px"><span style="color:#928374"> 12 </span><span style="color:#ebdbb2;font-weight:bold">motion_throttle         : 60</span><span style="color:#928374"> # Set to screen refresh rate for smoothest motions</span><span style="color:#504945">$</span></div>
<div class="t mono" style="left:1183.5px;top:954.1px;font-size:15px"><span style="color:#928374"> 13 </span><span style="color:#504945">$</span></div>
<div class="t mono" style="left:1183.5px;top:973.8px;font-size:15px"><span style="color:#928374"> 14 </span><span style="color:#928374"># Keybinds:</span><span style="color:#504945">$</span></div>
<div class="t mono" style="left:1183.5px;top:993.6px;font-size:15px"><span style="color:#928374"> 15 </span><span style="color:#928374"># Commands must be surrounded with ""</span><span style="color:#504945">$</span></div>
<div class="t mono" style="left:1183.5px;top:1013.3px;font-size:15px"><span style="color:#928374"> 16 </span><span style="color:#928374"># Function calls don't need this</span><span style="color:#504945">$</span></div>
<div class="t mono" style="left:1183.5px;top:1033.0px;font-size:15px"><span style="color:#928374"> 17 </span><span style="color:#504945">$</span></div>
<div class="t mono" style="left:1183.5px;top:1052.8px;font-size:15px"><span style="color:#928374"> 18 </span><span style="color:#ebdbb2;font-weight:bold">mod_key : alt</span><span style="color:#504945">$</span></div>
<div class="t mono" style="left:1183.5px;top:1072.5px;font-size:15px"><span style="color:#928374"> 19 </span><span style="color:#504945">$</span></div>
<div class="t mono" style="left:1183.5px;top:1092.3px;font-size:15px"><span style="color:#928374"> 20 </span><span style="color:#928374"># Application Launchers:</span><span style="color:#504945">$</span></div>
<div class="t mono" style="left:1183.5px;top:1112.0px;font-size:15px"><span style="color:#928374"> 21 </span><span style="color:#ebdbb2;font-weight:bold">bind : mod + Return : </span><span style="color:#b8bb26">"st"</span><span style="color:#504945">$</span></div>
<div class="t mono" style="left:1183.5px;top:1131.7px;font-size:15px"><span style="color:#ebdbb2">                                                                                               1,1           Top</span></div>
<div class="a" style="left:1183.5px;top:1157px;width:511px;height:1.5px;background:#d5c4a1"></div>
<div class="a" style="left:1694.5px;top:1157px;width:504px;height:1.5px;background:#98971a"></div>
<div class="t mono" style="left:1183.5px;top:1171.2px;font-size:15px"><span style="color:#cc241d">root</span><span style="color:#98971a">@</span><span style="color:#689d6a">freebsd</span><span style="color:#d79921"> /usr/ports</span><span style="color:#928374"> # </span><span style="color:#ebdbb2">git log -2 --oneline</span></div>
<div class="t mono" style="left:1183.5px;top:1191.0px;font-size:15px"><span style="color:#d79921">28650d7e1 </span><span style="color:#d79921">(</span><span style="color:#689d6a;font-weight:bold">HEAD</span><span style="color:#d79921"> -&gt; </span><span style="color:#98971a;font-weight:bold">main</span><span style="color:#d79921">)</span><span style="color:#ebdbb2"> x11-wm/sxwm: New port: Minimalistic tiling WM that's simple as i3 and smaller than dwm</span></div>
<div class="t mono" style="left:1183.5px;top:1210.7px;font-size:15px"><span style="color:#d79921">e09b0a16f</span><span style="color:#ebdbb2"> x11/sxbar: New port: Simple bar for X11 mainly for use with x11-wm/sxwm</span></div>
<div class="t mono" style="left:1183.5px;top:1230.4px;font-size:15px"><span style="color:#cc241d">root</span><span style="color:#98971a">@</span><span style="color:#689d6a">freebsd</span><span style="color:#d79921"> /usr/ports</span><span style="color:#928374"> # </span><span style="color:#ebdbb2">cat /home/yusuf/.xinitrc</span></div>
<div class="t mono" style="left:1183.5px;top:1250.2px;font-size:15px"><span style="color:#ebdbb2">#dwmbar &amp;</span></div>
<div class="t mono" style="left:1183.5px;top:1269.9px;font-size:15px"><span style="color:#ebdbb2">dunst &amp;</span></div>
<div class="t mono" style="left:1183.5px;top:1289.7px;font-size:15px"><span style="color:#ebdbb2">xrdb -load ~/.Xresources</span></div>
<div class="t mono" style="left:1183.5px;top:1309.4px;font-size:15px"><span style="color:#ebdbb2">feh --randomize --bg-fill ~/.wallpapers</span></div>
<div class="t mono" style="left:1183.5px;top:1329.1px;font-size:15px"><span style="color:#ebdbb2">picom &amp;</span></div>
<div class="t mono" style="left:1183.5px;top:1348.9px;font-size:15px"><span style="color:#ebdbb2">redshift &amp;</span></div>
<div class="t mono" style="left:1183.5px;top:1368.6px;font-size:15px"><span style="color:#ebdbb2">syncthing -no-browser &amp;</span></div>
<div class="t mono" style="left:1183.5px;top:1388.4px;font-size:15px"><span style="color:#ebdbb2">keepassxc &amp;</span></div>
<div class="t mono" style="left:1183.5px;top:1408.1px;font-size:15px"><span style="color:#ebdbb2">flameshot &amp;</span></div>
<div class="t mono" style="left:1183.5px;top:1427.8px;font-size:15px"><span style="color:#ebdbb2">firefox &amp;</span></div>
<div class="t mono" style="left:1183.5px;top:1447.6px;font-size:15px"><span style="color:#ebdbb2">#exec dbus-launch --exit-with-session --sh-syntax dwm</span></div>
<div class="t mono" style="left:1183.5px;top:1467.3px;font-size:15px"><span style="color:#ebdbb2">sxbar &amp;</span></div>
<div class="t mono" style="left:1183.5px;top:1487.1px;font-size:15px"><span style="color:#ebdbb2">exec dbus-launch --exit-with-session --sh-syntax sxwm</span></div>
<div class="t mono" style="left:1183.5px;top:1506.8px;font-size:15px"><span style="color:#cc241d">root</span><span style="color:#98971a">@</span><span style="color:#689d6a">freebsd</span><span style="color:#d79921"> /usr/ports</span><span style="color:#928374"> # </span></div>
<div class="a" style="left:1417.5px;top:1505.3px;width:9px;height:19px;background:#ebdbb2"></div>
<div class="a" style="left:1183.5px;top:1583.5px;width:1015px;height:19.5px;background:#8f8a1c"></div>
<div class="t mono" style="left:1183.5px;top:1585.8px;font-size:15px"><span style="color:#504945">[0] </span><span style="color:#504945;font-weight:bold">0:sudo*</span></div>
<div class="t mono" style="left:2217.5px;top:717.3px;font-size:8.889px"><span style="color:#98971a">yusuf</span><span style="color:#cc241d">@</span><span style="color:#689d6a">freebsd</span><span style="color:#928374"> ~ </span><span style="color:#ebdbb2">% </span><span style="color:#ebdbb2">ps lefauxw | grep -E "sxbar|sxwm|PID" | grep -vE "grep|vim"</span></div>
<div class="t mono" style="left:2217.5px;top:729.8px;font-size:8.889px"><span style="color:#ebdbb2"> UID   PID  PPID C PRI NI      VSZ    RSS MWCHAN STAT TT      TIME COMMAND          USER  %CPU %MEM STARTED</span></div>
<div class="t mono" style="left:2217.5px;top:742.4px;font-size:8.889px"><span style="color:#ebdbb2">1001 37437 15362 7  20  0    15756   3804 select I     -   0:00.00 sxbar            yusuf  0.0  0.0 20:59</span></div>
<div class="t mono" style="left:2217.5px;top:755.0px;font-size:8.889px"><span style="color:#ebdbb2">1001 27854 26813 1  20  0    16052   4316 select S    v0   0:00.14 sxwm             yusuf  0.0  0.0 20:41</span></div>
<div class="t mono" style="left:2217.5px;top:767.6px;font-size:8.889px"><span style="color:#98971a">yusuf</span><span style="color:#cc241d">@</span><span style="color:#689d6a">freebsd</span><span style="color:#928374"> ~ </span><span style="color:#ebdbb2">% </span></div>
<div class="a" style="left:2313.5px;top:766.0px;width:5.3px;height:12px;border:1px solid #ebdbb2"></div>
<div class="a" style="left:2217.5px;top:1159px;width:333px;height:1.3px;background:#98971a"></div>
<div class="a" style="left:2550.5px;top:1159px;width:331px;height:1.3px;background:#d5c4a1"></div>
<div class="t mono" style="left:2217.5px;top:1170.1px;font-size:8.889px"><span style="color:#98971a">yusuf</span><span style="color:#cc241d">@</span><span style="color:#689d6a">freebsd</span><span style="color:#928374"> ~ </span><span style="color:#ebdbb2">% </span><span style="color:#ebdbb2">neofetch</span></div>
<div class="t mono" style="left:2217.5px;top:1182.7px;font-size:8.889px"><span style="color:#ebdbb2">```</span><span style="color:#ebdbb2">                        </span><span style="color:#cc241d">`</span></div>
<div class="t mono" style="left:2217.5px;top:1195.3px;font-size:8.889px"><span style="color:#ebdbb2">  ` `.....---...</span><span style="color:#cc241d">....--.```   -/</span></div>
<div class="t mono" style="left:2217.5px;top:1207.9px;font-size:8.889px"><span style="color:#ebdbb2">  +o   .--`         </span><span style="color:#cc241d">/y:`      +.</span></div>
<div class="t mono" style="left:2217.5px;top:1220.5px;font-size:8.889px"><span style="color:#ebdbb2">   yo`:.            </span><span style="color:#cc241d">:o      `+-</span></div>
<div class="t mono" style="left:2217.5px;top:1233.0px;font-size:8.889px"><span style="color:#ebdbb2">    y/               </span><span style="color:#cc241d">-/`   -o/</span></div>
<div class="t mono" style="left:2217.5px;top:1245.6px;font-size:8.889px"><span style="color:#ebdbb2">   .-                  </span><span style="color:#cc241d">::/sy+:.</span></div>
<div class="t mono" style="left:2217.5px;top:1258.2px;font-size:8.889px"><span style="color:#ebdbb2">   /                     </span><span style="color:#cc241d">`--  /</span></div>
<div class="t mono" style="left:2217.5px;top:1270.8px;font-size:8.889px"><span style="color:#ebdbb2">  `:                          </span><span style="color:#cc241d">:`</span></div>
<div class="t mono" style="left:2217.5px;top:1283.4px;font-size:8.889px"><span style="color:#ebdbb2">  `:                          </span><span style="color:#cc241d">:`</span></div>
<div class="t mono" style="left:2217.5px;top:1295.9px;font-size:8.889px"><span style="color:#ebdbb2">   /                          </span><span style="color:#cc241d">/</span></div>
<div class="t mono" style="left:2217.5px;top:1308.5px;font-size:8.889px"><span style="color:#ebdbb2">   .-                        </span><span style="color:#cc241d">-.</span></div>
<div class="t mono" style="left:2217.5px;top:1321.1px;font-size:8.889px"><span style="color:#ebdbb2">    --                      </span><span style="color:#cc241d">-.</span></div>
<div class="t mono" style="left:2217.5px;top:1333.7px;font-size:8.889px"><span style="color:#ebdbb2">     `:`                  </span><span style="color:#cc241d">`:`</span></div>
<div class="t mono" style="left:2217.5px;top:1346.3px;font-size:8.889px"><span style="color:#cc241d">       .--             `--.</span></div>
<div class="t mono" style="left:2217.5px;top:1358.8px;font-size:8.889px"><span style="color:#cc241d">          .---.....----.</span></div>
<div class="t mono" style="left:2404.155px;top:1182.7px;font-size:8.889px"><span style="color:#cc241d;font-weight:bold">yusuf</span><span style="color:#ebdbb2">@</span><span style="color:#cc241d;font-weight:bold">freebsd</span></div>
<div class="t mono" style="left:2404.155px;top:1195.3px;font-size:8.889px"><span style="color:#ebdbb2">-------------</span></div>
<div class="t mono" style="left:2404.155px;top:1207.9px;font-size:8.889px"><span style="color:#cc241d;font-weight:bold">OS</span><span style="color:#ebdbb2">: FreeBSD 14.2-RELEASE-p3 amd64</span></div>
<div class="t mono" style="left:2404.155px;top:1220.5px;font-size:8.889px"><span style="color:#cc241d;font-weight:bold">Uptime</span><span style="color:#ebdbb2">: 5 hours, 51 mins</span></div>
<div class="t mono" style="left:2404.155px;top:1233.0px;font-size:8.889px"><span style="color:#cc241d;font-weight:bold">Packages</span><span style="color:#ebdbb2">: 402 (pkg)</span></div>
<div class="t mono" style="left:2404.155px;top:1245.6px;font-size:8.889px"><span style="color:#cc241d;font-weight:bold">Shell</span><span style="color:#ebdbb2">: tcsh 6.22.04</span></div>
<div class="t mono" style="left:2404.155px;top:1258.2px;font-size:8.889px"><span style="color:#cc241d;font-weight:bold">Resolution</span><span style="color:#ebdbb2">: 1920x1080</span></div>
<div class="t mono" style="left:2404.155px;top:1270.8px;font-size:8.889px"><span style="color:#cc241d;font-weight:bold">Terminal</span><span style="color:#ebdbb2">: tmux</span></div>
<div class="t mono" style="left:2404.155px;top:1283.4px;font-size:8.889px"><span style="color:#cc241d;font-weight:bold">CPU</span><span style="color:#ebdbb2">: AMD Ryzen 3 4300GE with Radeon Graphics (8) @ 3.493GHz</span></div>
<div class="t mono" style="left:2404.155px;top:1295.9px;font-size:8.889px"><span style="color:#cc241d;font-weight:bold">GPU</span><span style="color:#ebdbb2">: Renoir [Radeon Vega Series / Radeon Vega Mobile Series]</span></div>
<div class="t mono" style="left:2404.155px;top:1308.5px;font-size:8.889px"><span style="color:#cc241d;font-weight:bold">Memory</span><span style="color:#ebdbb2">: 5571MiB / 15620MiB</span></div>
<div class="a" style="left:2405.7px;top:1329.7px;width:16.4px;height:12.6px;background:#282828"></div>
<div class="a" style="left:2421.8px;top:1329.7px;width:16.4px;height:12.6px;background:#cc241d"></div>
<div class="a" style="left:2437.9px;top:1329.7px;width:16.4px;height:12.6px;background:#98971a"></div>
<div class="a" style="left:2454.0px;top:1329.7px;width:16.4px;height:12.6px;background:#d79921"></div>
<div class="a" style="left:2470.1px;top:1329.7px;width:16.4px;height:12.6px;background:#458588"></div>
<div class="a" style="left:2486.2px;top:1329.7px;width:16.4px;height:12.6px;background:#b16286"></div>
<div class="a" style="left:2502.3px;top:1329.7px;width:16.4px;height:12.6px;background:#689d6a"></div>
<div class="a" style="left:2518.4px;top:1329.7px;width:16.4px;height:12.6px;background:#a89984"></div>
<div class="a" style="left:2405.7px;top:1342.2px;width:16.4px;height:12.6px;background:#928374"></div>
<div class="a" style="left:2421.8px;top:1342.2px;width:16.4px;height:12.6px;background:#fb4934"></div>
<div class="a" style="left:2437.9px;top:1342.2px;width:16.4px;height:12.6px;background:#b8bb26"></div>
<div class="a" style="left:2454.0px;top:1342.2px;width:16.4px;height:12.6px;background:#fabd2f"></div>
<div class="a" style="left:2470.1px;top:1342.2px;width:16.4px;height:12.6px;background:#83a598"></div>
<div class="a" style="left:2486.2px;top:1342.2px;width:16.4px;height:12.6px;background:#d3869b"></div>
<div class="a" style="left:2502.3px;top:1342.2px;width:16.4px;height:12.6px;background:#8ec07c"></div>
<div class="a" style="left:2518.4px;top:1342.2px;width:16.4px;height:12.6px;background:#ebdbb2"></div>
<div class="t mono" style="left:2217.5px;top:1384.0px;font-size:8.889px"><span style="color:#98971a">yusuf</span><span style="color:#cc241d">@</span><span style="color:#689d6a">freebsd</span><span style="color:#928374"> ~ </span><span style="color:#ebdbb2">% </span></div>
<div class="a" style="left:2216px;top:1607px;width:666px;height:11.7px;background:#8f8a1c"></div>
<div class="t mono" style="left:2217.5px;top:1610.4px;font-size:8.889px"><span style="color:#504945">[4] </span><span style="color:#504945;font-weight:bold">0:tcsh*</span></div>
<div class="t" style="left:598px;top:1620px;font-size:14.4px;color:#222">x11-wm/sxwm with x11/sxbar with gruvbox theme (neither are committed to ports, yet</div>
<div class="a" style="left:1145.5px;top:1616px;width:20px;height:20px;border-radius:50%;background:radial-gradient(circle at 45% 40%,#ffe24a,#f3b300)"></div>
<div class="a" style="left:1151.5px;top:1621px;width:2.5px;height:4px;border-radius:1px;background:#333"></div>
<div class="a" style="left:1157.5px;top:1621px;width:2.5px;height:4px;border-radius:1px;background:#333"></div>
<svg style="left:1149.5px;top:1627px" width="12" height="6" viewBox="0 0 12 6"><path d="M1 1Q6 6 11 1" fill="none" stroke="#333" stroke-width="1.3"/></svg>
<div class="t" style="left:1166px;top:1620px;font-size:14.4px;color:#222">)</div>
<div class="t" style="left:598px;top:1652px;font-size:11.7px;color:#8f2424">Report</div>
<svg style="left:3198px;top:1652px" width="12" height="12" viewBox="0 0 12 12"><path d="M1 5h2.5v6H1zM3.5 5L6 1q1.5 0 1.5 1.5V4.5H11q1 0 .8 1.2L11 10q-.2 1-1.2 1H3.5" fill="none" stroke="#8f2424" stroke-width="1.1"/></svg>
<div class="t" style="left:3213px;top:1652.5px;font-size:12.2px;color:#8f2424">Thanks</div>
<svg style="left:3265px;top:1653px" width="10" height="10" viewBox="0 0 10 10"><path d="M5 0.5v9M0.5 5h9" stroke="#8f2424" stroke-width="1.6"/></svg><div class="t" style="left:3277px;top:1652px;font-size:12.2px;color:#8f2424">Quote</div>
<svg style="left:3323px;top:1652px" width="12" height="12" viewBox="0 0 12 12"><path d="M5 1L1 5l4 4M1 5h6a4 4 0 0 1 4 4v2" fill="none" stroke="#8f2424" stroke-width="1.3"/></svg>
<div class="t" style="left:3338px;top:1652px;font-size:12.2px;color:#8f2424">Reply</div>

<!-- pagination -->
<div class="a" style="left:462px;top:1686px;width:52px;height:26px;background:#fde4e4;border:1px solid #efcaca;border-radius:2px"></div>
<svg style="left:474px;top:1696px" width="5" height="7" viewBox="0 0 5 7"><path d="M5 0V7L0 3.5Z" fill="#8f2424"/></svg>
<div class="t" style="left:482px;top:1693px;font-size:12px;color:#8f2424">Prev</div>
<div class="a" style="left:517.5px;top:1686px;width:106px;height:26px;background:#fde4e4;border:1px solid #efcaca;border-radius:2px"></div>
<div class="a" style="left:538px;top:1686px;width:1px;height:26px;background:#efcaca"></div>
<div class="a" style="left:565px;top:1686px;width:1px;height:26px;background:#efcaca"></div>
<div class="a" style="left:594px;top:1686px;width:1px;height:26px;background:#efcaca"></div>
<div class="t" style="left:525px;top:1693px;font-size:12px;color:#8f2424">1</div>
<div class="t" style="left:546px;top:1693px;font-size:12px;color:#8f2424">...</div>
<div class="t" style="left:572px;top:1693px;font-size:12px;color:#8f2424">98</div>
<div class="t" style="left:601px;top:1693px;font-size:12px;color:#8f2424">99</div>
<div class="a" style="left:623px;top:1685.5px;width:34.5px;height:26.5px;background:#f7f3f3;border:1px solid #e03a3a;border-radius:2px"></div>
<div class="t" style="left:630px;top:1693px;font-size:12px;color:#444">100</div>
<!-- reply editor -->
<svg style="left:484.5px;top:1741.5px" width="82" height="82" viewBox="0 0 82 82"><defs><clipPath id="av2"><circle cx="41" cy="41" r="41"/></clipPath></defs><g clip-path="url(#av2)"><rect width="82" height="82" fill="#fff"/><rect x="3" y="0" width="76" height="82" rx="8" fill="#f00"/><rect x="20" y="0" width="42" height="27" fill="#000"/><rect x="45" y="4" width="11" height="19" fill="#f00"/><rect x="10" y="35" width="62" height="47" rx="3" fill="#000"/><rect x="12" y="40" width="58" height="36" fill="#fff"/><rect x="12" y="44" width="58" height="10" fill="#111"/><rect x="12" y="60" width="58" height="10" fill="#111"/><g fill="#fff"><rect x="14" y="46" width="5" height="6"/><rect x="22" y="46" width="4" height="6"/><rect x="30" y="46" width="7" height="6"/><rect x="40" y="46" width="7" height="6"/><rect x="50" y="46" width="7" height="6"/><rect x="60" y="46" width="7" height="6"/><rect x="15" y="62" width="7" height="6"/><rect x="25" y="62" width="7" height="6"/><rect x="35" y="62" width="7" height="6"/><rect x="45" y="62" width="7" height="6"/><rect x="55" y="62" width="7" height="6"/></g><rect x="10" y="76" width="62" height="6" fill="#f00"/></g></svg>
<svg style="left:580px;top:1770px" width="9" height="18" viewBox="0 0 9 18"><path d="M9 0L0 9L9 18Z" fill="#fff"/></svg>
<div class="a" style="left:597.5px;top:1740.5px;width:2769px;height:127px;background:#f9f9f9;border:1px solid #dcdcdc;border-radius:3px"></div>
<div class="a" style="left:3263.5px;top:1740.5px;width:103px;height:36px;background:#f9f9f9;border-left:1px solid #dcdcdc;border-bottom:1px solid #dcdcdc;border-top-right-radius:3px"></div>
<svg style="left:3284px;top:1751px" width="17" height="17" viewBox="0 0 17 17"><path d="M1.5 1h7l3 3v4M1.5 1v15h6" fill="none" stroke="#3a3a3a" stroke-width="1.3"/><circle cx="11" cy="11.5" r="3" fill="none" stroke="#3a3a3a" stroke-width="1.3"/><path d="M13.2 13.7l2.8 2.8" stroke="#3a3a3a" stroke-width="1.4"/></svg>
<div class="t" style="left:3307px;top:1753px;font-size:11.4px;font-weight:bold;color:#3a3a3a">Preview</div>
<!-- toolbar icons -->
<svg style="left:600px;top:1745px" width="520" height="32" viewBox="600 1745 520 32" fill="none" stroke="#3a2a2a" stroke-width="1.4">
<path d="M617 1765l9-9 6 6-9 9h-6zM619 1768h12" /><text x="647" y="1767" font-family="Liberation Serif" font-size="15" font-weight="bold" fill="#3a2a2a" stroke="none">B</text>
<text x="676" y="1767" font-family="Liberation Serif" font-size="15" font-style="italic" fill="#3a2a2a" stroke="none">I</text>
<text x="697" y="1767" font-family="Liberation Serif" font-size="15" font-weight="bold" fill="#3a2a2a" stroke="none">тT</text>
<path d="M716 1758h6l-3 3z" fill="#3a2a2a" stroke="none"/>
<path d="M745 1753a7 7 0 1 0 0 14c2 0 1-3 3-3h2a4 4 0 0 0 4-4c0-4-4-7-9-7z"/><circle cx="741" cy="1758" r=".8" fill="#3a2a2a"/><circle cx="745" cy="1756" r=".8" fill="#3a2a2a"/><circle cx="749" cy="1758" r=".8" fill="#3a2a2a"/>
<path d="M770 1756v.5M770 1760.5v.5M770 1765v.5" stroke-width="2"/>
<path d="M812 1756h.5M812 1760h.5M812 1764h.5M815 1756h8M815 1760h8M815 1764h8" /><path d="M826 1759h6l-3 3z" fill="#3a2a2a" stroke="none"/>
<path d="M840 1755h10M840 1758h7M840 1761h10M840 1764h7M840 1767h10" stroke-width="1.1"/><path d="M851 1759h6l-3 3z" fill="#3a2a2a" stroke="none"/>
<text x="880" y="1767" font-family="Liberation Sans" font-size="15" fill="#3a2a2a" stroke="none">¶</text><path d="M891 1759h6l-3 3z" fill="#3a2a2a" stroke="none"/>
<path d="M933 1763l-2 2a3 3 0 0 1-4-4l3-3a3 3 0 0 1 4 0M939 1758l2-2a3 3 0 0 1 4 4l-3 3a3 3 0 0 1-4 0"/>
<rect x="960" y="1755" width="14" height="11"/><path d="M962 1764l4-4 3 3 2-2 2 3z" fill="#3a2a2a" stroke="none"/>
<circle cx="995" cy="1760.5" r="6.5"/><path d="M992 1762q3 3 6 0" /><circle cx="993" cy="1759" r=".6" fill="#3a2a2a"/><circle cx="997" cy="1759" r=".6" fill="#3a2a2a"/>
<rect x="1016" y="1758" width="13" height="10" fill="#3a2a2a" stroke="none"/><path d="M1019 1755h12v9" /><rect x="1031" y="1753" width="2" height="8" fill="#3a2a2a" stroke="none"/>
<text x="1044" y="1771" font-family="Liberation Serif" font-size="20" font-weight="bold" fill="#3a2a2a" stroke="none">”</text>
<rect x="1074" y="1754" width="14" height="13"/><path d="M1074 1760.5h14M1081 1754v13"/>
<path d="M1107 1756v.5M1107 1760.5v.5M1107 1765v.5" stroke-width="2"/>
</svg>
<svg style="left:3140px;top:1752px" width="110" height="18" viewBox="0 0 110 18" fill="none" stroke-width="1.4">
<path d="M8 9a6 6 0 1 0 2-4.5M4 2v4h4" stroke="#c8c8c8"/><path d="M38 9a6 6 0 1 1-2-4.5M42 2v4h-4" stroke="#c8c8c8"/>
<path d="M63 2h-3v14h3M70 2h3v14h-3" stroke="#3a2a2a" stroke-width="1.6"/>
<rect x="86" y="2" width="13" height="14" rx="1" stroke="#3a2a2a"/><path d="M89 2v4h6V2" stroke="#3a2a2a"/><circle cx="92.5" cy="11" r="2" stroke="#3a2a2a"/><path d="M101 8h6l-3 3z" fill="#3a2a2a" stroke="none"/>
</svg>
<div class="t" style="left:616px;top:1789px;font-size:14.6px;color:#a0a0a0">Write your reply...</div>
<div class="a" style="left:598px;top:1877.5px;width:96px;height:27px;background:#fff;border:1px solid #dcdcdc;border-radius:3px"></div>
<svg style="left:607px;top:1884px" width="14" height="14" viewBox="0 0 14 14"><path d="M10 4L5 10a1.5 1.5 0 0 1-2-2l6-7a3 3 0 0 1 4 4l-6 7a4 4 0 0 1-6-5l5-6" fill="none" stroke="#8f2424" stroke-width="1.4"/></svg>
<div class="t" style="left:626px;top:1884px;font-size:12px;color:#8f2424">Attach files</div>
<div class="a" style="left:3275px;top:1877.5px;width:92px;height:27px;background:#c01c18;border-radius:3px"></div>
<svg style="left:3284px;top:1884px" width="17" height="14" viewBox="0 0 17 14"><path d="M6 1L1 6l5 5M1 6h9a5 5 0 0 1 5 5v2" fill="none" stroke="#fff" stroke-width="1.5"/></svg>
<div class="t" style="left:3305.5px;top:1884px;font-size:11.7px;color:#fff">Post reply</div>
<!-- share -->
<div class="t" style="left:462px;top:1941px;font-size:13.4px;color:#a0a0a0">Share:</div>
<svg style="left:0;top:1940px" width="800" height="20" viewBox="0 0 800 20" fill="#9a9a9a" stroke="#9a9a9a">
<path d="M511 2.5q5 1.5 9.3 7q4.3-5.5 9.3-7q0.5 6-2 8.5q2.5 1.5 0 4.5q-3.5 3.5-7.3-2q-3.8 5.5-7.3 2q-2.5-3 0-4.5q-2.5-2.5-2-8.5z" stroke="none"/>
<rect x="544" y="2" width="15.5" height="15.5" fill="none" stroke-width="1.6"/><path d="M547.5 8v6.5M547.5 5v1M551 14.5V8M551 11q0-3 2.8-3t2.8 3v3.5" fill="none" stroke-width="1.8"/>
<ellipse cx="583" cy="11.5" rx="8" ry="5.5" stroke="none"/><circle cx="580" cy="11" r="1.3" fill="#eaeaea" stroke="none"/><circle cx="586" cy="11" r="1.3" fill="#eaeaea" stroke="none"/><path d="M583 6l1.5-4 3.5 1" fill="none" stroke-width="1.2"/><circle cx="589" cy="3" r="1.3" stroke="none"/>
<path d="M613 18l2.3-9M609 9.5a6.5 6.5 0 1 1 6 4q-2.5 0-2.5-3" fill="none" stroke-width="1.7"/>
<path d="M645 1.5v13.5q0 2.5 2.5 2.5h4M641.5 7h8.5" fill="none" stroke-width="3"/>
<circle cx="678.5" cy="10" r="7.5" fill="none" stroke-width="1.5"/><path d="M671.5 18l1.5-4M675 8q1.5 4.5 7 6" fill="none" stroke-width="1.4"/>
<rect x="700.5" y="4" width="18" height="12.5" rx="1" fill="none" stroke-width="1.6"/><path d="M701 5l8.5 6.5 8.5-6.5" fill="none" stroke-width="1.6"/>
<path d="M739 14l-2 2a3.5 3.5 0 0 1-5-5l3.5-3.5a3.5 3.5 0 0 1 5 0M744 6l2-2a3.5 3.5 0 0 1 5 5l-3.5 3.5a3.5 3.5 0 0 1-5 0" fill="none" stroke-width="1.7"/>
</svg>
<!-- notification bar -->
<div class="a" style="left:194px;top:1984px;width:3451px;height:39px;background:#fde4e4;border-top:1px solid #f0d6d6"></div>
<div class="t" style="left:1666px;top:1995px;font-size:14.25px;color:#333">The FreeBSD Forums would like your permission to <span style="color:#8f2424">enable push notifications</span>.</div>
<svg style="left:3622px;top:1994px" width="12" height="12" viewBox="0 0 12 12"><path d="M1 1L11 11M11 1L1 11" stroke="#555" stroke-width="1.6"/></svg>

<!-- dock -->
<div class="a" style="left:1693px;top:2044px;width:453px;height:104px;border-radius:30px;background:#2d2d2d"></div>
<svg style="left:1690px;top:2060px" width="460" height="80" viewBox="1690 2060 460 80">
<defs>
<linearGradient id="g1" x1="0" y1="0" x2="1" y2="1"><stop offset="0" stop-color="#4a4af0"/><stop offset=".5" stop-color="#2a9af0"/><stop offset="1" stop-color="#6af0c0"/></linearGradient>
<linearGradient id="g2" x1="0" y1="1" x2="1" y2="0"><stop offset="0" stop-color="#b060e8"/><stop offset="1" stop-color="#f0a080"/></linearGradient>
<linearGradient id="g3" x1="0" y1="1" x2="1" y2="0"><stop offset="0" stop-color="#f060d0"/><stop offset="1" stop-color="#c040e0"/></linearGradient>
<linearGradient id="g4" x1="0" y1="0" x2="0" y2="1"><stop offset="0" stop-color="#ff9a10"/><stop offset="1" stop-color="#ffe000"/></linearGradient>
<linearGradient id="g5" x1="0" y1="0" x2="1" y2="1"><stop offset="0" stop-color="#ff3050"/><stop offset="1" stop-color="#b0108a"/></linearGradient>
</defs>
<circle cx="1747" cy="2096" r="29" fill="none" stroke="url(#g1)" stroke-width="4" stroke-dasharray="120 20"/>
<path d="M1722 2085q8-10 18-5l-2 8-8 3zM1752 2082q12-4 18 10l-6 20q-8 4-10-6l-6-8q2-10 4-16z" fill="url(#g1)"/>
<path d="M1736 2094l14 26-8-2-6 10-5-2 5-10-7-2z" fill="#3a8af8"/>
<g fill="url(#g2)"><path d="M1801 2060v60q0 8 8 8h14v-6h-16v-62zM1861 2060v60q0 8-8 8h-26v-6h28v-62z"/>
<circle cx="1813" cy="2098" r="3"/><circle cx="1825" cy="2098" r="3"/><circle cx="1837" cy="2098" r="3"/><circle cx="1849" cy="2098" r="3"/>
<circle cx="1825" cy="2086" r="3"/><circle cx="1837" cy="2086" r="3"/><circle cx="1849" cy="2086" r="3"/>
<circle cx="1813" cy="2110" r="3"/><circle cx="1825" cy="2110" r="3"/><circle cx="1837" cy="2110" r="3"/><circle cx="1849" cy="2110" r="3"/></g>
<g fill="url(#g3)"><rect x="1883" y="2070" width="7" height="22" rx="3.5"/><path d="M1883 2106a3.5 3.5 0 0 1 7 0v12h12a3.5 3.5 0 0 1 0 7h-13q-6 0-6-6z"/><path d="M1943 2087a3.5 3.5 0 0 0-7 0v31h-24a3.5 3.5 0 0 0 0 7h25q6 0 6-6z"/></g>
<rect x="1961" y="2081" width="1" height="47" fill="#4a4a4a"/>
<circle cx="2008" cy="2096" r="28" fill="none" stroke="url(#g5)" stroke-width="5"/>
<path d="M1996 2080q-6 8 2 16q8 8 18 2q6-4 4-12q-2 8-10 8q-8 0-8-8q0-4 4-6q-6-2-10 0z" fill="url(#g4)"/>
<circle cx="2007" cy="2132" r="3" fill="#fff"/>
<g fill="#fff"><rect x="2068" y="2092" width="9" height="9"/><rect x="2088" y="2092" width="9" height="9"/><rect x="2108" y="2092" width="9" height="9"/><rect x="2068" y="2112" width="9" height="9"/><rect x="2088" y="2112" width="9" height="9"/><rect x="2108" y="2112" width="9" height="9"/></g>
</svg>
<!-- tooltip -->
<div class="a" style="left:1650px;top:2047px;width:538px;height:34px;border-radius:17px;background:#333333"></div>
<div class="t" style="left:1662px;top:2057px;font-size:15px;color:#f0f0f0">FreeBSD Screen Shots | Page 100 | The FreeBSD Forums — Mozilla Firefox</div>
<!-- firefox overlay icon -->
<svg style="left:1880px;top:1970px" width="80" height="80" viewBox="0 0 80 80">
<defs><linearGradient id="f1" x1="0" y1="0" x2="1" y2="1"><stop offset="0" stop-color="#ff4040"/><stop offset="1" stop-color="#a0108a"/></linearGradient><linearGradient id="f2" x1="0" y1="0" x2="0" y2="1"><stop offset="0" stop-color="#ff9010"/><stop offset="1" stop-color="#ffe000"/></linearGradient></defs>
<circle cx="39" cy="40" r="28" fill="none" stroke="url(#f1)" stroke-width="4.5"/>
<path d="M22 28q6-12 22-10q-10 2-10 8" fill="none" stroke="#ff5030" stroke-width="5"/>
<path d="M28 26q-6 10 2 18q10 8 20 0q6-6 2-16q-2 8-10 10q-8 0-9-8q0-4 3-6q-5-1-8 2z" fill="url(#f2)"/>
</svg>

</body></html>
